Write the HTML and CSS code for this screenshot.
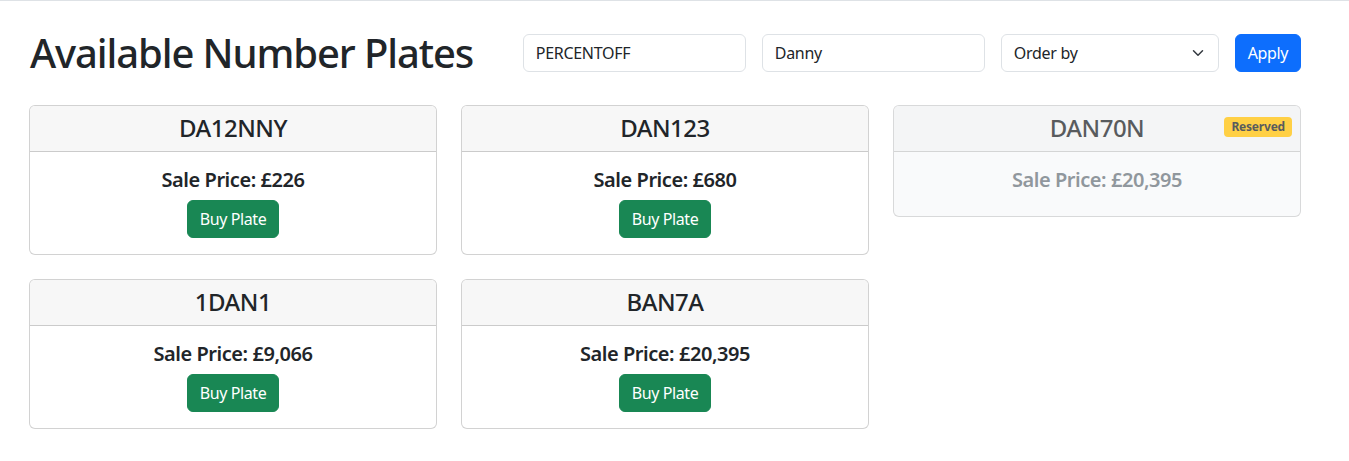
FILE: index.html
```html
<!DOCTYPE html>
<html lang="en">
<head>
<meta charset="utf-8">
<title>Available Number Plates</title>
<link rel="stylesheet" href="styles.css">
</head>
<body>
<main class="page">
  <header class="topbar">
    <h1 class="title">Available Number Plates</h1>
    <form class="filters">
      <input class="field field-code" type="text" value="PERCENTOFF">
      <input class="field field-search" type="text" value="Danny">
      <div class="field field-select">
        <span>Order by</span>
        <svg class="chevron" width="16" height="12" viewBox="0 0 16 16"><path d="m2 5 6 6 6-6" fill="none" stroke="#343a40" stroke-width="2" stroke-linecap="round" stroke-linejoin="round"/></svg>
      </div>
      <button class="btn btn-primary" type="button">Apply</button>
    </form>
  </header>

  <section class="plates">
    <article class="card">
      <div class="card-header">DA12NNY</div>
      <div class="card-body">
        <div class="price">Sale Price: £226</div>
        <button class="btn btn-success" type="button">Buy Plate</button>
      </div>
    </article>
    <article class="card">
      <div class="card-header">DAN123</div>
      <div class="card-body">
        <div class="price">Sale Price: £680</div>
        <button class="btn btn-success" type="button">Buy Plate</button>
      </div>
    </article>
    <article class="card card-reserved">
      <div class="card-header">DAN70N<span class="badge">Reserved</span></div>
      <div class="card-body">
        <div class="price price-muted">Sale Price: £20,395</div>
      </div>
    </article>
    <article class="card">
      <div class="card-header">1DAN1</div>
      <div class="card-body">
        <div class="price">Sale Price: £9,066</div>
        <button class="btn btn-success" type="button">Buy Plate</button>
      </div>
    </article>
    <article class="card">
      <div class="card-header">BAN7A</div>
      <div class="card-body">
        <div class="price">Sale Price: £20,395</div>
        <button class="btn btn-success" type="button">Buy Plate</button>
      </div>
    </article>
  </section>
</main>
</body>
</html>
```

FILE: styles.css
```css
* { box-sizing: border-box; }

html, body {
  margin: 0;
  background: #fff;
}

body {
  font-family: "Noto Sans", "Open Sans", sans-serif;
  font-size: 16px;
  line-height: 1.5;
  color: #212529;
  border-top: 1px solid #dee2e6;
}

.page {
  padding: 27px 48px 24px 30px;
}

.topbar {
  display: flex;
  align-items: center;
  justify-content: space-between;
  height: 50px;
}

.title {
  margin: 0;
  font-size: 40px;
  font-weight: 500;
  line-height: 1.2;
  letter-spacing: -1.1px;
}

.filters {
  display: flex;
  gap: 16px;
  align-items: center;
}

.field {
  height: 38px;
  padding: 6px 12px;
  border: 1px solid #dee2e6;
  border-radius: 6px;
  font: inherit;
  color: #212529;
  background: #fff;
  letter-spacing: -0.3px;
}

.field-code, .field-search { width: 223px; }

.field-select {
  width: 218px;
  display: flex;
  align-items: center;
  justify-content: space-between;
}

.btn {
  height: 38px;
  padding: 6px 12px;
  border: 1px solid transparent;
  border-radius: 6px;
  font: inherit;
  color: #fff;
  cursor: pointer;
  letter-spacing: -0.4px;
}

.btn-primary { background: #0d6efd; border-color: #0d6efd; }
.btn-success { background: #198754; border-color: #198754; }

.plates {
  margin-top: 27px;
  margin-left: -1px;
  display: grid;
  grid-template-columns: repeat(3, 408px);
  column-gap: 24px;
  row-gap: 24px;
  align-items: start;
}

.card {
  position: relative;
  border: 1px solid rgba(0, 0, 0, 0.175);
  border-radius: 6px;
  background: #fff;
  overflow: hidden;
}

.card-header {
  padding: 8px 16px;
  background: #f7f7f7;
  border-bottom: 1px solid rgba(0, 0, 0, 0.175);
  text-align: center;
  font-size: 24px;
  font-weight: 500;
  line-height: 1.2;
  letter-spacing: -0.5px;
}

.card-body {
  padding: 16px;
  text-align: center;
}

.price {
  margin-bottom: 8px;
  font-size: 20px;
  font-weight: 600;
  line-height: 1.2;
  letter-spacing: -0.45px;
}

.card-reserved {
  opacity: 0.75;
  background: #f8f9fa;
}

.card-reserved .card-header { background: #f1f2f3; }

.price-muted { color: #6c757d; }

.badge {
  position: absolute;
  top: 11px;
  right: 8px;
  padding: 3px 7px;
  border-radius: 4px;
  background: #ffc107;
  color: #212529;
  font-size: 12px;
  font-weight: 700;
  line-height: 1.15;
  letter-spacing: -0.2px;
}
```
